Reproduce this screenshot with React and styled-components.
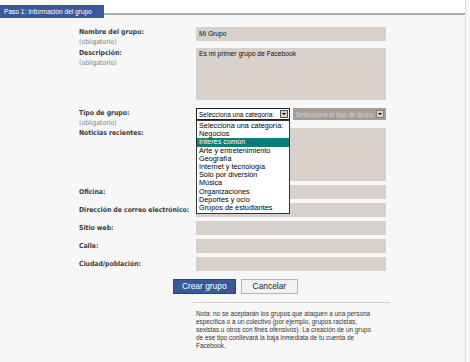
import React from "react";
import styled, { createGlobalStyle } from "styled-components";

const GlobalStyle = createGlobalStyle`
  body {
    margin: 0;
    background: #f7f7f7;
    font-family: "Liberation Sans", Arial, sans-serif;
  }
`;

const categories = [
  "Selecciona una categoría:",
  "Negocios",
  "Interés común",
  "Arte y entretenimiento",
  "Geografía",
  "Internet y tecnología",
  "Sólo por diversión",
  "Música",
  "Organizaciones",
  "Deportes y ocio",
  "Grupos de estudiantes",
];

export default function App() {
  return (
    <Page>
      <GlobalStyle />
      <Header>
        <Tab>Paso 1: Información del grupo</Tab>
      </Header>
      <Form>
        <Row $gap={1}>
          <Label>
            Nombre del grupo:
            <Required>(obligatorio)</Required>
          </Label>
          <Field $h={14}>Mi Grupo</Field>
        </Row>
        <Row $gap={8}>
          <Label>
            Descripción:
            <Required>(obligatorio)</Required>
          </Label>
          <Field $h={52} $area>Es mi primer grupo de Facebook</Field>
        </Row>
        <Row $gap={0}>
          <Label>
            Tipo de grupo:
            <Required>(obligatorio)</Required>
          </Label>
          <Selects>
            <Select>
              <SelectText>Selecciona una categoría:</SelectText>
              <Arrow />
              <Menu>
                {categories.map((c, i) => (
                  <MenuItem key={c} $active={i === 2}>{c}</MenuItem>
                ))}
              </Menu>
            </Select>
            <Select $disabled>
              <SelectText>Selecciona el tipo de grupo</SelectText>
              <Arrow $disabled />
            </Select>
          </Selects>
        </Row>
        <Row $gap={4}>
          <Label>Noticias recientes:</Label>
          <Field $h={53} />
        </Row>
        <Row $gap={4}>
          <Label $center>Oficina:</Label>
          <Field $h={14} />
        </Row>
        <Row $gap={4}>
          <Label $center>Dirección de correo electrónico:</Label>
          <Field $h={14} />
        </Row>
        <Row $gap={4}>
          <Label $center>Sitio web:</Label>
          <Field $h={14} />
        </Row>
        <Row $gap={4}>
          <Label $center>Calle:</Label>
          <Field $h={14} />
        </Row>
        <Row $gap={8}>
          <Label $center>Ciudad/población:</Label>
          <Field $h={14} />
        </Row>
        <Buttons>
          <Button $primary>Crear grupo</Button>
          <Button>Cancelar</Button>
        </Buttons>
        <Divider />
        <Note>
          Nota: no se aceptarán los grupos que ataquen a una persona<br />
          específica o a un colectivo (por ejemplo, grupos racistas,<br />
          sexistas u otros con fines ofensivos). La creación de un grupo<br />
          de ese tipo conllevará la baja inmediata de tu cuenta de<br />
          Facebook.
        </Note>
      </Form>
    </Page>
  );
}

const Page = styled.div`
  width: 465px;
  min-height: 362px;
  border-right: 1px solid #dcdcdc;
  background: #f7f7f7;
`;

const Header = styled.div`
  height: 13px;
  background: #fff;
  border-bottom: 2px solid #a7b0c1;
`;

const Tab = styled.div`
  display: inline-block;
  width: 104px;
  height: 13px;
  background: #3b5998;
  color: #fff;
  font-size: 6.6px;
  line-height: 13px;
  padding-left: 4px;
  box-sizing: border-box;
  white-space: nowrap;
`;

const Form = styled.div`
  padding: 12px 0 0 79px;
  width: 309px;
`;

const Row = styled.div`
  display: grid;
  grid-template-columns: 117px 190px;
  align-items: start;
  margin-bottom: ${(p) => p.$gap}px;
`;

const Label = styled.div`
  font-family: "DejaVu Sans Condensed", "Liberation Sans", sans-serif;
  font-size: 6.8px;
  font-weight: bold;
  line-height: 10px;
  color: #3a3a3a;
  padding-top: ${(p) => (p.$center ? 2 : 0)}px;
  white-space: nowrap;
`;

const Required = styled.div`
  font-weight: normal;
  color: #7a7a7a;
`;

const Field = styled.div`
  height: ${(p) => p.$h}px;
  background: #d8d0cb;
  font-size: 6.7px;
  line-height: ${(p) => (p.$area ? "11px" : `${p.$h}px`)};
  padding: 0 3px;
  color: #111;
  box-sizing: border-box;
`;

const Selects = styled.div`
  display: flex;
  gap: 3px;
  height: 12px;
`;

const Select = styled.div`
  position: relative;
  flex: 1;
  display: flex;
  align-items: center;
  justify-content: space-between;
  height: 12px;
  padding: 0 1px 0 2px;
  box-sizing: border-box;
  border: 1px solid ${(p) => (p.$disabled ? "#a69d98" : "#222")};
  background: ${(p) => (p.$disabled ? "#a69d98" : "#fff")};
  color: ${(p) => (p.$disabled ? "#d9d2ce" : "#000")};
  font-size: 6.5px;
  white-space: nowrap;
`;

const SelectText = styled.span`
  overflow: hidden;
  flex: 1;
  min-width: 0;
`;

const Arrow = styled.div`
  flex: none;
  width: 8px;
  height: 8px;
  margin-left: 1px;
  box-sizing: border-box;
  border: 1px solid ${(p) => (p.$disabled ? "#8a827d" : "#555")};
  background: #d4d0c8;
  position: relative;
  &::after {
    content: "";
    position: absolute;
    left: 1px;
    top: 2px;
    border-left: 2px solid transparent;
    border-right: 2px solid transparent;
    border-top: 2px solid #000;
  }
`;

const Menu = styled.div`
  position: absolute;
  left: -1px;
  top: 11px;
  width: 94px;
  padding: 1px 0;
  background: #fff;
  border: 1px solid #333;
  box-sizing: border-box;
  z-index: 2;
`;

const MenuItem = styled.div`
  font-size: 7.3px;
  line-height: 8.2px;
  padding-left: 2px;
  background: ${(p) => (p.$active ? "#0f7b7b" : "transparent")};
  color: ${(p) => (p.$active ? "#fff" : "#000")};
`;

const Buttons = styled.div`
  display: flex;
  justify-content: center;
  gap: 5px;
  padding-left: 4px;
`;

const Button = styled.div`
  height: 15px;
  padding: 0 ${(p) => (p.$primary ? 8 : 11)}px;
  box-sizing: border-box;
  border: 1px solid ${(p) => (p.$primary ? "#29447e" : "#b5b5b5")};
  background: ${(p) => (p.$primary ? "#3b5998" : "#f2f2f2")};
  color: ${(p) => (p.$primary ? "#fff" : "#222")};
  font-size: 8.4px;
  line-height: 13px;
`;

const Divider = styled.div`
  margin: 8px 0 0 114px;
  width: 197px;
  border-top: 1px solid #cfcfcf;
`;

const Note = styled.p`
  margin: 7px 0 0 117px;
  font-size: 6.4px;
  line-height: 8px;
  color: #333;
  white-space: nowrap;
`;
